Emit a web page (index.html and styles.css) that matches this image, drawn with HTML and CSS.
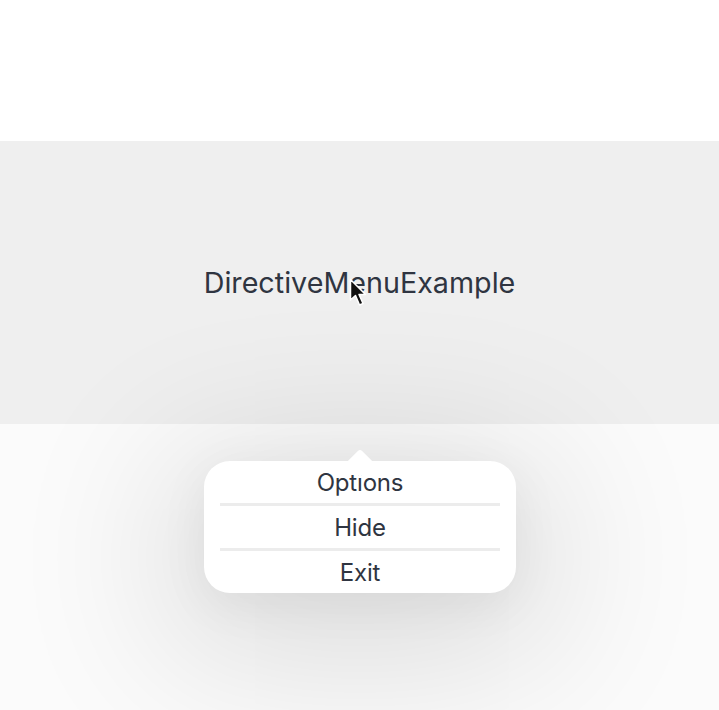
FILE: index.html
```html
<!DOCTYPE html>
<html>
<head>
<meta charset="utf-8">
<link rel="stylesheet" href="styles.css">
</head>
<body>
<div class="page">
  <div class="top"></div>
  <div class="band">
    <div class="title">DirectiveMenuExample</div>
  </div>
  <div class="rest"></div>
</div>
<div class="menu">
  <div class="arrow"></div>
  <div class="item">Options</div>
  <div class="divider"></div>
  <div class="item">Hide</div>
  <div class="divider"></div>
  <div class="item">Exit</div>
</div>
<svg class="cursor" width="22" height="32" viewBox="0 0 22 32">
  <path d="M1.5 1.5 L1.5 22 L6.5 17.5 L10.5 27 L14 25.5 L10 16.5 L16.5 16.5 Z" fill="#111" stroke="#fff" stroke-width="1.5" stroke-linejoin="round"/>
</svg>
</body>
</html>
```
FILE: styles.css
```css
html, body {
  margin: 0;
  padding: 0;
  background: #ffffff;
  font-family: Inter, "Noto Sans", sans-serif;
}
.page {
  display: flex;
  flex-direction: column;
  width: 719px;
  height: 710px;
  overflow: hidden;
}
.top {
  height: 141px;
  background: #ffffff;
}
.band {
  height: 283px;
  background: #efefef;
  display: flex;
  align-items: center;
  justify-content: center;
}
.title {
  font-size: 28.7px;
  color: #2f3541;
}
.rest {
  flex: 1;
  background: #fbfbfb;
}
.menu {
  position: absolute;
  left: 204px;
  top: 461px;
  width: 312px;
  height: 132px;
  box-sizing: border-box;
  padding: 0 14px;
  background: #ffffff;
  border-radius: 26px;
  box-shadow: 0 30px 160px 40px rgba(0, 0, 0, 0.12), 0 10px 50px rgba(0, 0, 0, 0.06);
  display: flex;
  flex-direction: column;
}
.arrow {
  position: absolute;
  left: 146px;
  top: -8px;
  width: 20px;
  height: 20px;
  background: #ffffff;
  transform: rotate(45deg);
  border-radius: 3px 0 0 0;
}
.item {
  height: 42px;
  display: flex;
  align-items: center;
  justify-content: center;
  font-size: 24px;
  letter-spacing: -0.2px;
  color: #2f3541;
}
.divider {
  height: 3px;
  background: #ececec;
  margin: 0 2px;
  flex: none;
}
.cursor {
  position: absolute;
  left: 349px;
  top: 278px;
}
```
